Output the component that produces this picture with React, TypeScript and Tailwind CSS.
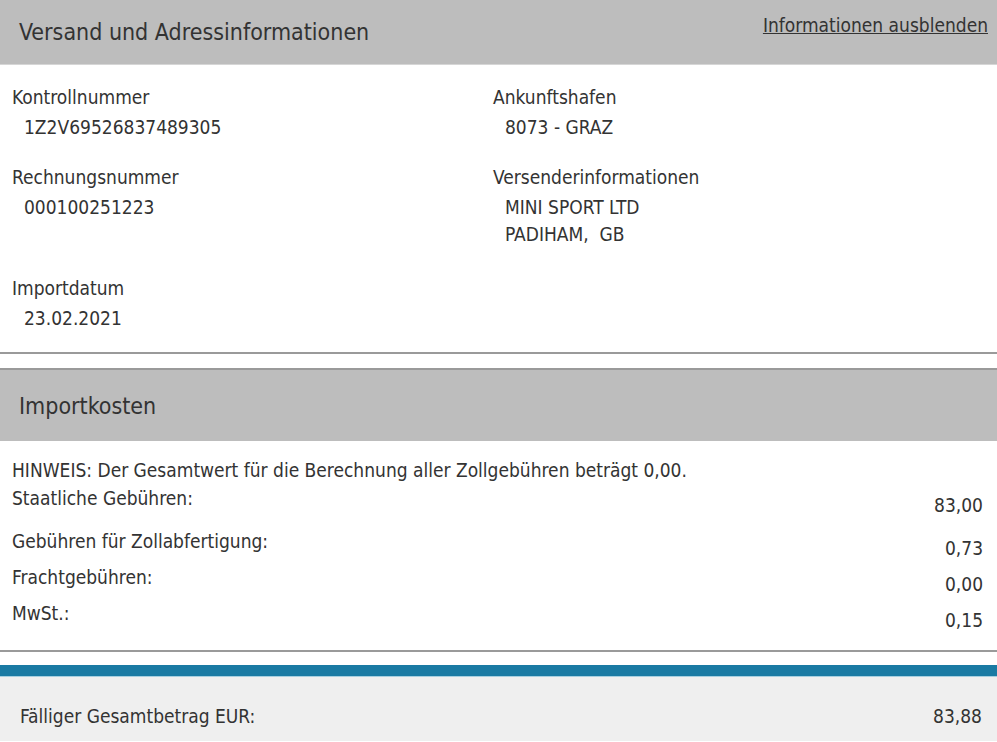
const font = "font-['DejaVu_Sans_Condensed','DejaVu_Sans',sans-serif]";

type Field = { label: string; lines: string[] };

const leftFields: Field[] = [
  { label: "Kontrollnummer", lines: ["1Z2V69526837489305"] },
  { label: "Rechnungsnummer", lines: ["000100251223"] },
  { label: "Importdatum", lines: ["23.02.2021"] },
];

const rightFields: Field[] = [
  { label: "Ankunftshafen", lines: ["8073 - GRAZ"] },
  { label: "Versenderinformationen", lines: ["MINI SPORT LTD", "PADIHAM,\u00a0 GB"] },
];

const costs = [
  { label: "Staatliche Gebühren:", value: "83,00", h: "h-[43px]" },
  { label: "Gebühren für Zollabfertigung:", value: "0,73", h: "h-[36px]" },
  { label: "Frachtgebühren:", value: "0,00", h: "h-[36px]" },
  { label: "MwSt.:", value: "0,15", h: "h-[36px]" },
];

function FieldBlock({ field, tall }: { field: Field; tall?: boolean }) {
  return (
    <div className={tall ? "h-[111px]" : "h-[80px]"}>
      <div className="text-[19px] leading-[24px]">{field.label}</div>
      <div className="mt-[5px] pl-[12px] text-[19px] leading-[27px]">
        {field.lines.map((l) => (
          <div key={l}>{l}</div>
        ))}
      </div>
    </div>
  );
}

export default function App() {
  return (
    <div className={`${font} w-[997px] h-[742px] overflow-hidden bg-white text-[#333]`}>
      {/* Versand */}
      <div className="flex h-[65px] items-start justify-between border-b border-[#d6d6d6] bg-[#bdbdbd] pl-[19px] pr-[9px]">
        <h2 className="mt-[18px] text-[23px] leading-[28px] text-[#333]">Versand und Adressinformationen</h2>
        <a href="#" className="mt-[13px] text-[19px] leading-[24px] text-[#333] underline">
          Informationen ausblenden
        </a>
      </div>

      <div className="grid h-[289px] grid-cols-[481px_1fr] border-b-2 border-[#9a9a9a] pl-[12px] pt-[20px]">
        <div>
          <FieldBlock field={leftFields[0]} />
          <FieldBlock field={leftFields[1]} tall />
          <FieldBlock field={leftFields[2]} />
        </div>
        <div>
          <FieldBlock field={rightFields[0]} />
          <FieldBlock field={rightFields[1]} />
        </div>
      </div>

      {/* Importkosten */}
      <div className="mt-[14px] flex h-[73px] items-center border-t-2 border-[#9a9a9a] bg-[#bdbdbd] pl-[19px]">
        <h2 className="text-[23px] leading-[28px]">Importkosten</h2>
      </div>

      <div className="h-[211px] border-b-2 border-[#9a9a9a] pl-[12px] pr-[14px] pt-[17px]">
        <div className="text-[19px] leading-[24px]">
          HINWEIS: Der Gesamtwert für die Berechnung aller Zollgebühren beträgt 0,00.
        </div>
        {costs.map((c) => (
          <div key={c.label} className={`flex ${c.h} items-start justify-between text-[19px] leading-[24px]`}>
            <span className="mt-[4px]">{c.label}</span>
            <span className="mt-[11px]">{c.value}</span>
          </div>
        ))}
      </div>

      <div className="mt-[13px] h-[12px] border-b border-[#a6cfe0] bg-[#1a7aa3]" />
      <div className="flex h-[64px] items-center justify-between bg-[#efefef] pl-[20px] pr-[15px]">
        <span className="mt-[14px] text-[19px] leading-[24px]">Fälliger Gesamtbetrag EUR:</span>
        <span className="mt-[14px] text-[19px] leading-[24px]">83,88</span>
      </div>
    </div>
  );
}
